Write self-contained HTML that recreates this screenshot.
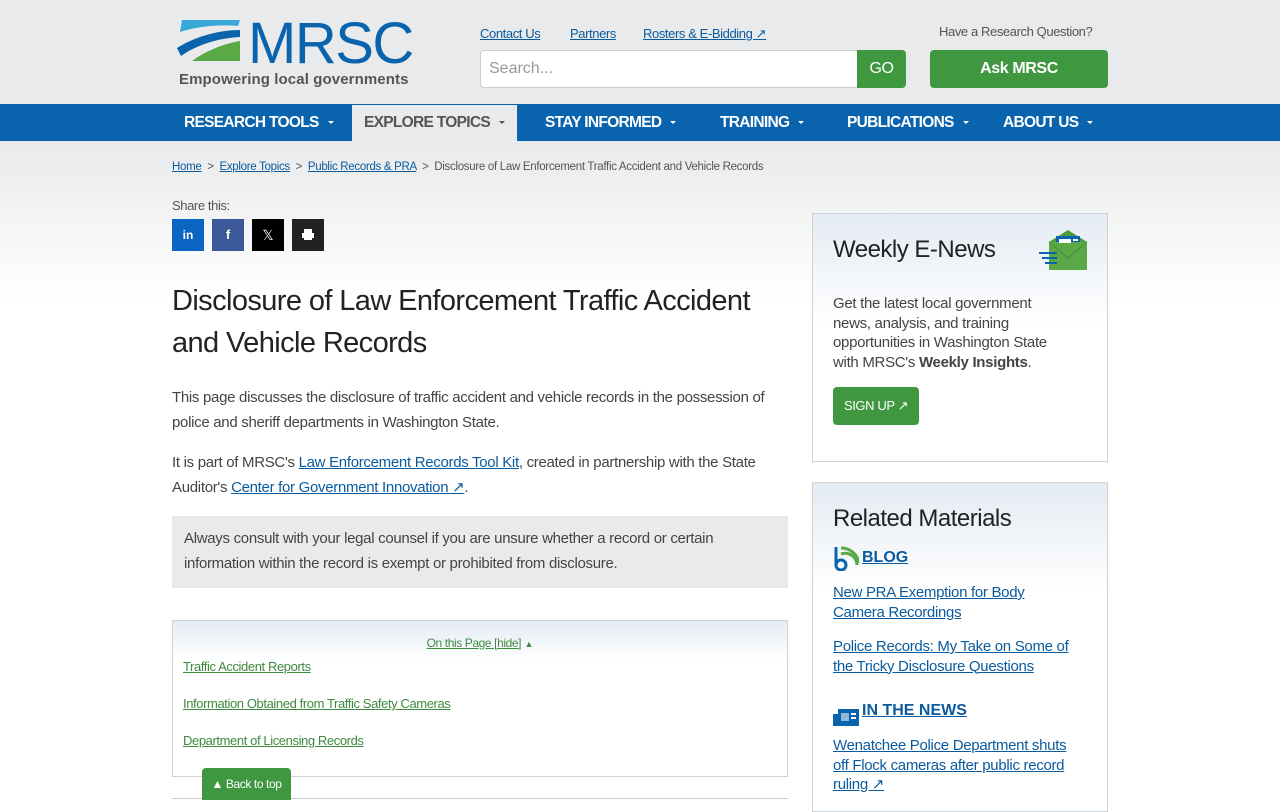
<!DOCTYPE html>
<html><head><meta charset="utf-8"><style>
*{box-sizing:border-box;margin:0;padding:0}
body{width:1280px;height:800px;overflow:hidden;font-family:"Liberation Sans",sans-serif;background:#fff;position:relative;color:#333}
.hdr{position:absolute;left:0;top:0;width:1280px;height:104px;background:#e9eaeb}
.grad{position:absolute;left:0;top:141px;width:1280px;height:160px;background:linear-gradient(#e9eaeb,#fff)}
.nav{position:absolute;left:0;top:104px;width:1280px;height:37px;background:#0a63ad}
.nav span{position:absolute;top:0;line-height:37px;color:#fff;font-weight:bold;font-size:15.5px;letter-spacing:-0.7px}
.nav span:after{content:"";display:inline-block;margin-left:9px;vertical-align:middle;border-left:3.5px solid transparent;border-right:3.5px solid transparent;border-top:3.5px solid currentColor}
a{color:#0a5a9e;text-decoration:underline}
.a{position:absolute;white-space:nowrap}
.sm{font-size:13px;letter-spacing:-0.4px}
.btn{position:absolute;background:#3f973f;color:#fff;border-radius:4px;text-align:center;font-weight:bold;letter-spacing:-0.4px}
.p{font-size:15px;line-height:24.5px;color:#444;letter-spacing:-0.3px}
.card{position:absolute;border:1px solid #cfd4d8;background:linear-gradient(#e4ebf3,#fff 110px)}
.toc a{color:#3f8a3f;font-size:13px;letter-spacing:-0.4px}
</style></head><body>
<div class="hdr"></div>
<div class="grad"></div>
<svg class="a" style="left:176px;top:18px" width="66" height="45" viewBox="0 0 66 45">
<path d="M6 2 L64 2 L62 8 C40 6 20 9 4 14 Z" fill="#3aa7d9"/>
<path d="M1 30 C20 18 44 12 64 12 L64 19 C44 20 22 26 5 38 Z" fill="#0a63ad"/>
<path d="M16 43 L64 43 L64 23 C46 26 28 34 16 43 Z" fill="#5aa846"/>
</svg>
<div class="a" style="left:248px;top:10px;font-size:58px;color:#0a63ad;letter-spacing:-1.5px">MRSC</div>
<div class="a" style="left:179px;top:71px;font-size:15px;color:#555;font-weight:bold;letter-spacing:0.1px">Empowering local governments</div>
<a class="a sm" style="left:480px;top:26px">Contact Us</a>
<a class="a sm" style="left:570px;top:26px">Partners</a>
<a class="a sm" style="left:643px;top:26px">Rosters &amp; E-Bidding ↗</a>
<div class="a sm" style="left:939px;top:24px;color:#555">Have a Research Question?</div>
<div class="a" style="left:480px;top:50px;width:380px;height:38px;background:#fff;border:1px solid #ccc;border-radius:4px;font-size:16px;color:#999;padding:9px 8px">Search...</div>
<div class="btn" style="left:857px;top:50px;width:49px;height:38px;line-height:38px;font-size:16px;border-radius:0 4px 4px 0;font-weight:normal">GO</div>
<div class="btn" style="left:930px;top:50px;width:178px;height:38px;line-height:38px;font-size:16px">Ask MRSC</div>
<div class="nav">
<span style="left:184px">RESEARCH TOOLS</span>
<div style="position:absolute;left:352px;top:1px;width:165px;height:36px;background:#e9eaeb"></div>
<span style="left:364px;color:#555">EXPLORE TOPICS</span>
<span style="left:545px">STAY INFORMED</span>
<span style="left:720px">TRAINING</span>
<span style="left:847px">PUBLICATIONS</span>
<span style="left:1003px">ABOUT US</span>
</div>
<div class="a" style="left:172px;top:161px;font-size:11.5px;color:#555;letter-spacing:-0.3px"><a>Home</a> &nbsp;&gt;&nbsp; <a>Explore Topics</a> &nbsp;&gt;&nbsp; <a>Public Records &amp; PRA</a> &nbsp;&gt;&nbsp; Disclosure of Law Enforcement Traffic Accident and Vehicle Records</div>
<div class="a sm" style="left:172px;top:198px;color:#555">Share this:</div>
<div class="a" style="left:172px;top:219px;width:32px;height:32px;background:#0a66c2;color:#fff;font-size:12px;font-weight:bold;text-align:center;line-height:32px">in</div>
<div class="a" style="left:212px;top:219px;width:32px;height:32px;background:#3b5998;color:#fff;font-size:13px;font-weight:bold;text-align:center;line-height:32px">f</div>
<div class="a" style="left:252px;top:219px;width:32px;height:32px;background:#000;color:#fff;font-size:14px;text-align:center;line-height:32px">𝕏</div>
<div class="a" style="left:292px;top:219px;width:32px;height:32px;background:#222"><svg width="32" height="32" viewBox="0 0 32 32"><rect x="12" y="10" width="8" height="4" fill="#fff"/><rect x="10" y="14" width="12" height="5" fill="#fff"/><rect x="12" y="18" width="8" height="3" fill="#fff"/></svg></div>
<div class="a" style="left:172px;top:280px;width:620px;font-size:29px;line-height:42px;color:#222;letter-spacing:-0.6px;white-space:normal">Disclosure of Law Enforcement Traffic Accident and Vehicle Records</div>
<div class="a p" style="left:172px;top:386px;width:620px;white-space:normal">This page discusses the disclosure of traffic accident and vehicle records in the possession of police and sheriff departments in Washington State.</div>
<div class="a p" style="left:172px;top:451px;width:620px;white-space:normal">It is part of MRSC's <a>Law Enforcement Records Tool Kit</a>, created in partnership with the State Auditor's <a>Center for Government Innovation ↗</a>.</div>
<div class="a p" style="left:172px;top:516px;width:616px;height:72px;background:#e9eaeb;padding:11px 12px;white-space:normal">Always consult with your legal counsel if you are unsure whether a record or certain information within the record is exempt or prohibited from disclosure.</div>
<div class="a toc" style="left:172px;top:620px;width:616px;height:157px;border:1px solid #cfd4d8;background:linear-gradient(#e4ebf3,#fff 40px)">
<div style="position:absolute;left:0;width:100%;top:15px;text-align:center;font-size:12px"><a style="font-size:12px">On this Page [hide]</a> <span style="color:#3f8a3f;font-size:9px">▲</span></div>
<a style="position:absolute;left:10px;top:38px">Traffic Accident Reports</a>
<a style="position:absolute;left:10px;top:75px">Information Obtained from Traffic Safety Cameras</a>
<a style="position:absolute;left:10px;top:112px">Department of Licensing Records</a>
</div>
<div class="a" style="left:172px;top:798px;width:616px;height:1px;background:#ccc"></div>
<div class="btn" style="left:202px;top:768px;width:89px;height:32px;line-height:32px;font-size:12px;font-weight:normal;border-radius:4px 4px 0 0">▲ Back to top</div>

<div class="card" style="left:812px;top:213px;width:296px;height:249px">
<div style="position:absolute;left:20px;top:22px;font-size:24px;color:#222;letter-spacing:-0.5px">Weekly E-News</div>
<svg style="position:absolute;left:226px;top:16px" width="50" height="42" viewBox="0 0 50 42"><rect x="10" y="12" width="38" height="28" fill="#5aa846"/><path d="M10 12 L29 0 L48 12 Z" fill="#4c9a3c"/><rect x="17" y="6" width="24" height="12" fill="#0a63ad"/><path d="M10 12 L29 28 L48 12" fill="#5aa846" stroke="#3f8a3f"/><rect x="20" y="9" width="12" height="4" fill="#fff"/><rect x="34" y="9" width="5" height="2" fill="#fff"/><rect x="0" y="22" width="18" height="2" fill="#0a63ad"/><rect x="3" y="27" width="15" height="2" fill="#0a63ad"/><rect x="6" y="32" width="12" height="2" fill="#0a63ad"/></svg>
<div class="p" style="position:absolute;left:20px;top:80px;width:270px;line-height:19.5px;white-space:nowrap">Get the latest local government<br>news, analysis, and training<br>opportunities in Washington State<br>with MRSC's <b>Weekly Insights</b>.</div>
<div class="btn" style="left:20px;top:173px;width:86px;height:38px;line-height:38px;font-size:13px;font-weight:normal">SIGN UP ↗</div>
</div>
<div class="card" style="left:812px;top:482px;width:296px;height:330px">
<div style="position:absolute;left:20px;top:22px;font-size:24px;color:#222;letter-spacing:-0.5px">Related Materials</div>
<svg style="position:absolute;left:20px;top:62px" width="26" height="26" viewBox="0 0 26 26"><path d="M8 9 A12 12 0 0 1 24 20" stroke="#5aa846" stroke-width="3" fill="none"/><path d="M8 3 A18 18 0 0 1 26 18" stroke="#5aa846" stroke-width="3" fill="none"/><path d="M3 2 V20" stroke="#0a63ad" stroke-width="3"/><circle cx="8" cy="20" r="5" stroke="#0a63ad" stroke-width="3" fill="none"/></svg>
<a style="position:absolute;left:49px;top:66px;font-size:16px;font-weight:bold">BLOG</a>
<a class="p" style="position:absolute;left:20px;top:100px;line-height:19.5px;color:#0a5a9e;white-space:nowrap">New PRA Exemption for Body<br>Camera Recordings</a>
<a class="p" style="position:absolute;left:20px;top:154px;line-height:19.5px;color:#0a5a9e;white-space:nowrap">Police Records: My Take on Some of<br>the Tricky Disclosure Questions</a>
<svg style="position:absolute;left:20px;top:225px" width="26" height="18" viewBox="0 0 26 18"><rect x="0" y="6" width="5" height="12" fill="#0a63ad"/><rect x="5" y="1" width="21" height="17" fill="#0a63ad"/><rect x="8" y="5" width="8" height="8" fill="#8fb8d8"/><rect x="18" y="5" width="5" height="2" fill="#fff"/><rect x="18" y="9" width="5" height="2" fill="#fff"/></svg>
<a style="position:absolute;left:49px;top:219px;font-size:16px;font-weight:bold">IN THE NEWS</a>
<a class="p" style="position:absolute;left:20px;top:253px;line-height:19.5px;color:#0a5a9e;white-space:nowrap">Wenatchee Police Department shuts<br>off Flock cameras after public record<br>ruling ↗</a>
</div>
</body></html>
